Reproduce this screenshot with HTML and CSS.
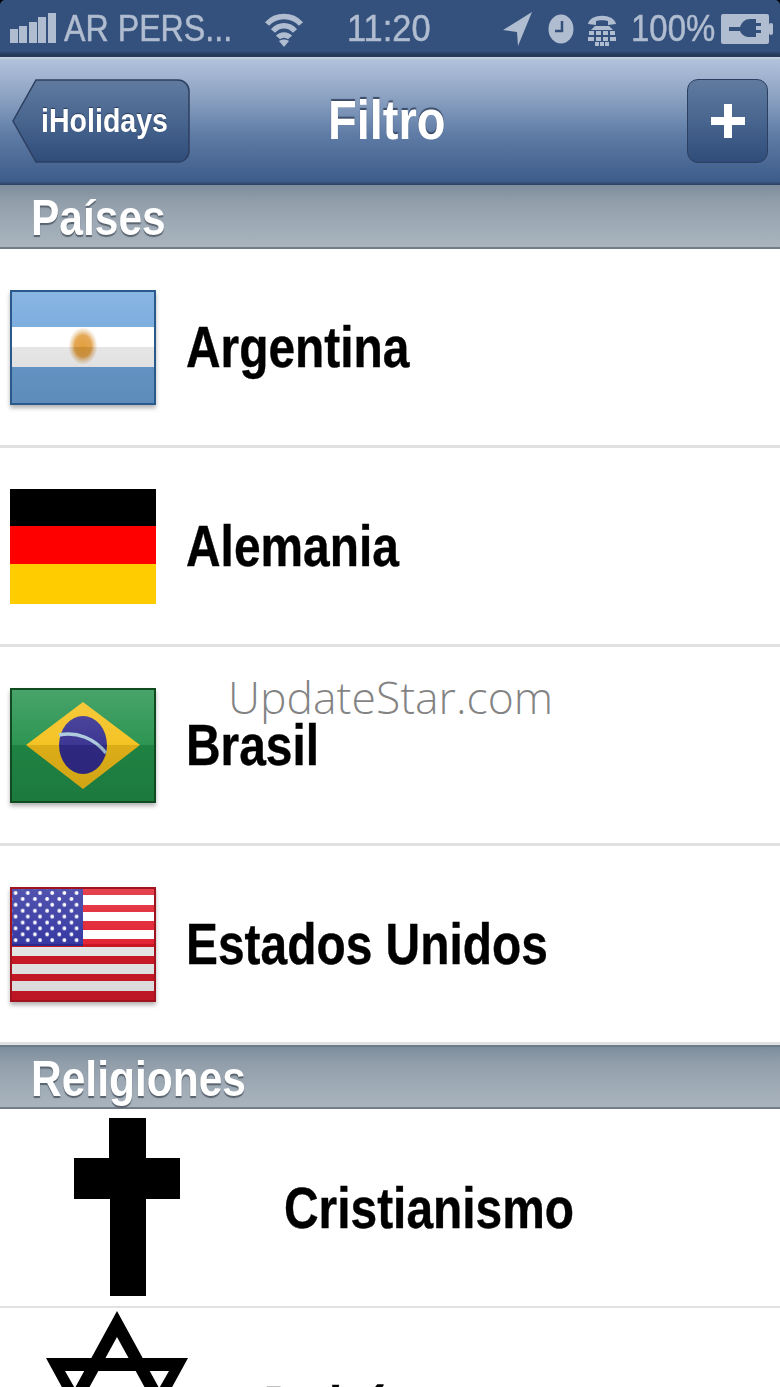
FILE: index.html
```html
<!DOCTYPE html>
<html lang="es">
<head>
<meta charset="utf-8">
<title>Filtro</title>
<link rel="stylesheet" href="styles.css">
</head>
<body>
<div class="screen">
  <header class="status">
    <div class="status-left">
      <svg class="signal" viewBox="0 0 48 32" width="48" height="32"><rect x="1" y="16" width="8" height="14"/><rect x="10" y="13" width="8" height="17"/><rect x="20" y="9" width="8" height="21"/><rect x="29" y="4" width="8" height="26"/><rect x="39" y="0" width="8" height="30"/></svg>
      <span class="st-text carrier">AR PERS...</span>
      <svg class="wifi" viewBox="0 0 40 36" width="40" height="36"><path d="M3 13C12 3 28 3 37 13M9 20C15 13 25 13 31 20M14 26.500C17 23 23 23 26 26.500" fill="none" stroke-width="5.500"/><path class="solid" d="M20 36l-5-6c3-2 7-2 10 0z"/></svg>
    </div>
    <span class="st-text clock">11:20</span>
    <div class="status-right">
      <svg class="loc" viewBox="0 0 32 34" width="32" height="34"><path class="solid" d="M29 0L0 18l14 2 1 14z"/></svg>
      <svg class="alarm" viewBox="0 0 26 30" width="26" height="30"><ellipse class="solid" cx="13" cy="15" rx="12.500" ry="14.500"/><path class="hand" d="M14 7v10H7" fill="none" stroke-width="2.500"/></svg>
      <svg class="tty" viewBox="0 0 30 34" width="30" height="34"><path class="solid" d="M1 12C3 1 27 1 29 12l-8 1V9c-3-1-9-1-12 0v4zM8 14h14l4 4H4z"/><path class="dots" d="M2 19h5v4H2zM9 19h5v4H9zM16 19h5v4h-5zM23 19h5v4h-5zM1 25h6v4H1zM9 25h5v4H9zM16 25h5v4h-5zM23 25h6v4h-6zM8 30h4v4H8zM13 30h4v4h-4zM18 30h4v4h-4z"/></svg>
      <span class="st-text battery-label">100%</span>
      <svg class="battery" viewBox="0 0 52 32" width="52" height="32"><path class="solid" fill-rule="evenodd" d="M2 1h44a2 2 0 0 1 2 2v26a2 2 0 0 1-2 2H2a2 2 0 0 1-2-2V3a2 2 0 0 1 2-2zM8 14v4h11c2 4 5 6 10 6h6v-4h5v-3h-5v-4h5v-3h-5V6h-6c-5 0-8 3-10 8z"/><rect class="solid" x="48" y="10" width="4" height="12" rx="2"/></svg>
    </div>
  </header>

  <nav class="navbar">
    <button class="nav-btn back"><svg class="back-shape" viewBox="0 0 178 84" width="178" height="84"><defs><linearGradient id="bk" x1="0" y1="0" x2="0" y2="1"><stop offset="0" stop-color="#617b9f"/><stop offset=".5" stop-color="#48658f"/><stop offset="1" stop-color="#304c7a"/></linearGradient></defs><path d="M24 1H166a11 11 0 0 1 11 11V72a11 11 0 0 1-11 11H24L1 42z" fill="url(#bk)" stroke="#2c3f60" stroke-width="1.500"/></svg><span class="squeeze back-label">iHolidays</span></button>
    <h1 class="squeeze title">Filtro</h1>
    <button class="nav-btn add"><svg viewBox="0 0 34 34" width="34" height="34"><path d="M13 0h8v13h13v8H21v13h-8V21H0v-8h13z" fill="#fff"/></svg></button>
  </nav>

  <section>
    <h2 class="section-head"><span class="squeeze head-label">Países</span></h2>
    <div class="row">
      <svg class="flag" viewBox="0 0 146 115" width="146" height="115"><defs><linearGradient id="gl" x1="0" y1="0" x2="0" y2="1"><stop offset="0" stop-color="#fff" stop-opacity=".18"/><stop offset=".49" stop-color="#fff" stop-opacity=".05"/><stop offset=".5" stop-color="#000" stop-opacity=".1"/><stop offset="1" stop-color="#000" stop-opacity=".16"/></linearGradient><radialGradient id="sun"><stop offset="0" stop-color="#e19b32"/><stop offset=".6" stop-color="#e2a24a"/><stop offset="1" stop-color="#e9c9a0" stop-opacity=".2"/></radialGradient></defs><rect width="146" height="115" fill="#70a6dc"/><rect y="37" width="146" height="40" fill="#fff"/><ellipse cx="73" cy="56" rx="14" ry="18" fill="url(#sun)"/><rect width="146" height="115" fill="url(#gl)"/><rect x="1" y="1" width="144" height="113" fill="none" stroke="#2a5a8c" stroke-width="2"/></svg>
      <span class="squeeze row-label">Argentina</span>
    </div>
    <div class="row">
      <svg class="flag plain" viewBox="0 0 146 115" width="146" height="115"><rect width="146" height="37" fill="#000"/><rect y="37" width="146" height="38" fill="#f00"/><rect y="75" width="146" height="40" fill="#fc0"/></svg>
      <span class="squeeze row-label">Alemania</span>
    </div>
    <div class="row">
      <svg class="flag" viewBox="0 0 146 115" width="146" height="115"><rect width="146" height="115" fill="#22904a"/><path d="M73 14L130 57 73 101 16 57z" fill="#f4c01a"/><ellipse cx="73" cy="57" rx="24" ry="29" fill="#332d8e"/><path d="M49 47c18-4 36 4 47 18" fill="none" stroke="#a9c9dc" stroke-width="3.500"/><rect width="146" height="115" fill="url(#gl)"/><rect x="1" y="1" width="144" height="113" fill="none" stroke="#0f4a20" stroke-width="2"/></svg>
      <span class="squeeze row-label">Brasil</span>
    </div>
    <div class="row">
      <svg class="flag" viewBox="0 0 146 115" width="146" height="115"><defs><pattern id="st1" x="2.600" y="3" width="12.200" height="11.800" patternUnits="userSpaceOnUse"><circle cx="3" cy="3" r="1.900" fill="#fff"/></pattern><pattern id="st2" x="9.700" y="9" width="12.200" height="11.800" patternUnits="userSpaceOnUse"><circle cx="3" cy="3" r="1.900" fill="#fff"/></pattern></defs><rect width="146" height="115" fill="#fff"/><g fill="#e01a2a"><rect width="146" height="8"/><rect y="18" width="146" height="7"/><rect y="34" width="146" height="9"/><rect y="52" width="146" height="8"/><rect y="69" width="146" height="8"/><rect y="87" width="146" height="7"/><rect y="104" width="146" height="11"/></g><rect width="73" height="59" fill="#2d2f9e"/><rect width="71" height="59" fill="url(#st1)"/><rect width="70" height="56" fill="url(#st2)"/><rect width="146" height="115" fill="url(#gl)"/><rect x="1" y="1" width="144" height="113" fill="none" stroke="#a01420" stroke-width="2"/></svg>
      <span class="squeeze row-label">Estados Unidos</span>
    </div>
  </section>

  <section>
    <h2 class="section-head second"><span class="squeeze head-label">Religiones</span></h2>
    <div class="row religion">
      <svg class="rel-icon" viewBox="0 0 106 178" width="106" height="178"><path d="M35 0h37v40h34v41H72v97H36V81H0V40h35z"/></svg>
      <span class="squeeze row-label">Cristianismo</span>
    </div>
    <div class="row religion last">
      <svg class="star-icon" viewBox="0 0 142 177" width="142" height="177"><path fill-rule="evenodd" d="M0 47H142L71 177zM19 60L71 151 123 60z"/><path fill-rule="evenodd" d="M71 0L142 130H0zM71 26L21 117H121z"/></svg>
      <span class="squeeze row-label">Judaísmo</span>
    </div>
  </section>

  <div class="watermark">UpdateStar.com</div>
</div>
</body>
</html>
```
FILE: styles.css
```css
* { box-sizing: border-box; }
html, body { margin: 0; height: 100%; overflow: hidden; background: #fff; }
body { font-family: "Liberation Sans", Arial, sans-serif; }
.screen { position: relative; width: 780px; height: 1387px; overflow: hidden; background: linear-gradient(#000 20px, #fff 20px); }
.squeeze { display: inline-block; transform: scaleX(.84); transform-origin: left center; white-space: nowrap; }

.status { height: 59px; display: flex; align-items: center; padding: 0 0 0 9px; background: linear-gradient(#34507c, #34507c 90%, #26395a 96%); border-bottom: 2px solid #c4cedd; border-radius: 5px 5px 0 0; position: relative; }
.status svg { fill: #b0bccf; stroke: #b0bccf; flex: none; }
.status svg .solid, .status svg rect, .status svg .dots { stroke: none; fill: #b0bccf; }
.status svg .hand { stroke: #34507a; }
.status-left { display: flex; align-items: center; width: 338px; }
.status-right { display: flex; align-items: center; margin-left: auto; }
.st-text { color: #b0bccf; font-size: 37px; line-height: 40px; display: inline-block; transform: scaleX(.87); transform-origin: left center; white-space: nowrap; -webkit-text-stroke: .5px #b0bccf; }
.signal { margin-right: 7px; }
.carrier { width: 164px; }
.wifi { margin-left: 36px; }
.clock { width: 120px; transform: scaleX(.93); }
.loc { margin-right: 13px; }
.alarm { margin-right: 13px; }
.tty { margin-right: 14px; }
.battery-label { width: 90px; transform: scaleX(.89); }
.battery { margin-right: 7px; }

.navbar { height: 126px; display: flex; align-items: center; justify-content: space-between; padding: 0 12px; background: linear-gradient(#b2c2dc, #8ca2c2 30%, #5f7ca6 60%, #3e5c8a 97%, #2b3f60); position: relative; }
.nav-btn { padding: 0; border: 0; background: none; position: relative; display: flex; align-items: center; justify-content: center; font-family: inherit; }
.back { width: 178px; height: 84px; margin-top: -3px; }
.back-shape { position: absolute; left: 0; top: 0; }
.back-label { position: absolute; left: 29px; top: 20px; color: #fff; font-weight: 700; font-size: 34px; line-height: 42px; text-shadow: 0 -1px 1px #2a3d5c; }
.title { position: absolute; left: 328px; top: 18px; margin: 0; color: #fff; font-size: 56px; line-height: 86px; font-weight: 700; text-shadow: 0 -2px 1px #3b4c68; }
.add { width: 81px; height: 84px; margin-top: -3px; border: 1.500px solid #2c3f60; border-radius: 11px; background: linear-gradient(#617b9f, #48658f 50%, #304c7a); }

.section-head { margin: 0; height: 64px; padding: 3px 0 0 31px; background: linear-gradient(#7e8d9c, #93a0ac 30%, #a9b4be); border-bottom: 2px solid #737d88; display: flex; align-items: center; }
.section-head.second { border-top: 2px solid #6d7b8b; }
.head-label { color: #fff; font-size: 50px; line-height: 60px; font-weight: 700; transform: scaleX(.85); text-shadow: 0 2px 1px #59636e; }

.row { height: 199px; display: flex; align-items: center; padding-left: 10px; border-bottom: 3px solid #e1e1e1; position: relative; }
.row .flag { margin-right: 30px; filter: drop-shadow(0 3px 2px rgba(0, 0, 0, .3)); }
.row .flag.plain { filter: none; }
.row-label { color: #000; font-size: 57px; line-height: 70px; font-weight: 700; -webkit-text-stroke: .4px #000; }
.religion { padding-left: 74px; border-bottom-width: 2px; }
.rel-icon { margin-right: 104px; margin-top: -2px; }
.religion.last { padding-left: 46px; align-items: flex-start; }
.star-icon { margin-right: 69px; margin-top: 3px; }
.religion.last .row-label { margin-top: 64px; }

.watermark { position: absolute; left: 228px; top: 672px; font-family: "Open Sans", sans-serif; font-weight: 300; font-size: 44.500px; line-height: 50px; color: rgba(90, 90, 90, .75); white-space: nowrap; }
```
